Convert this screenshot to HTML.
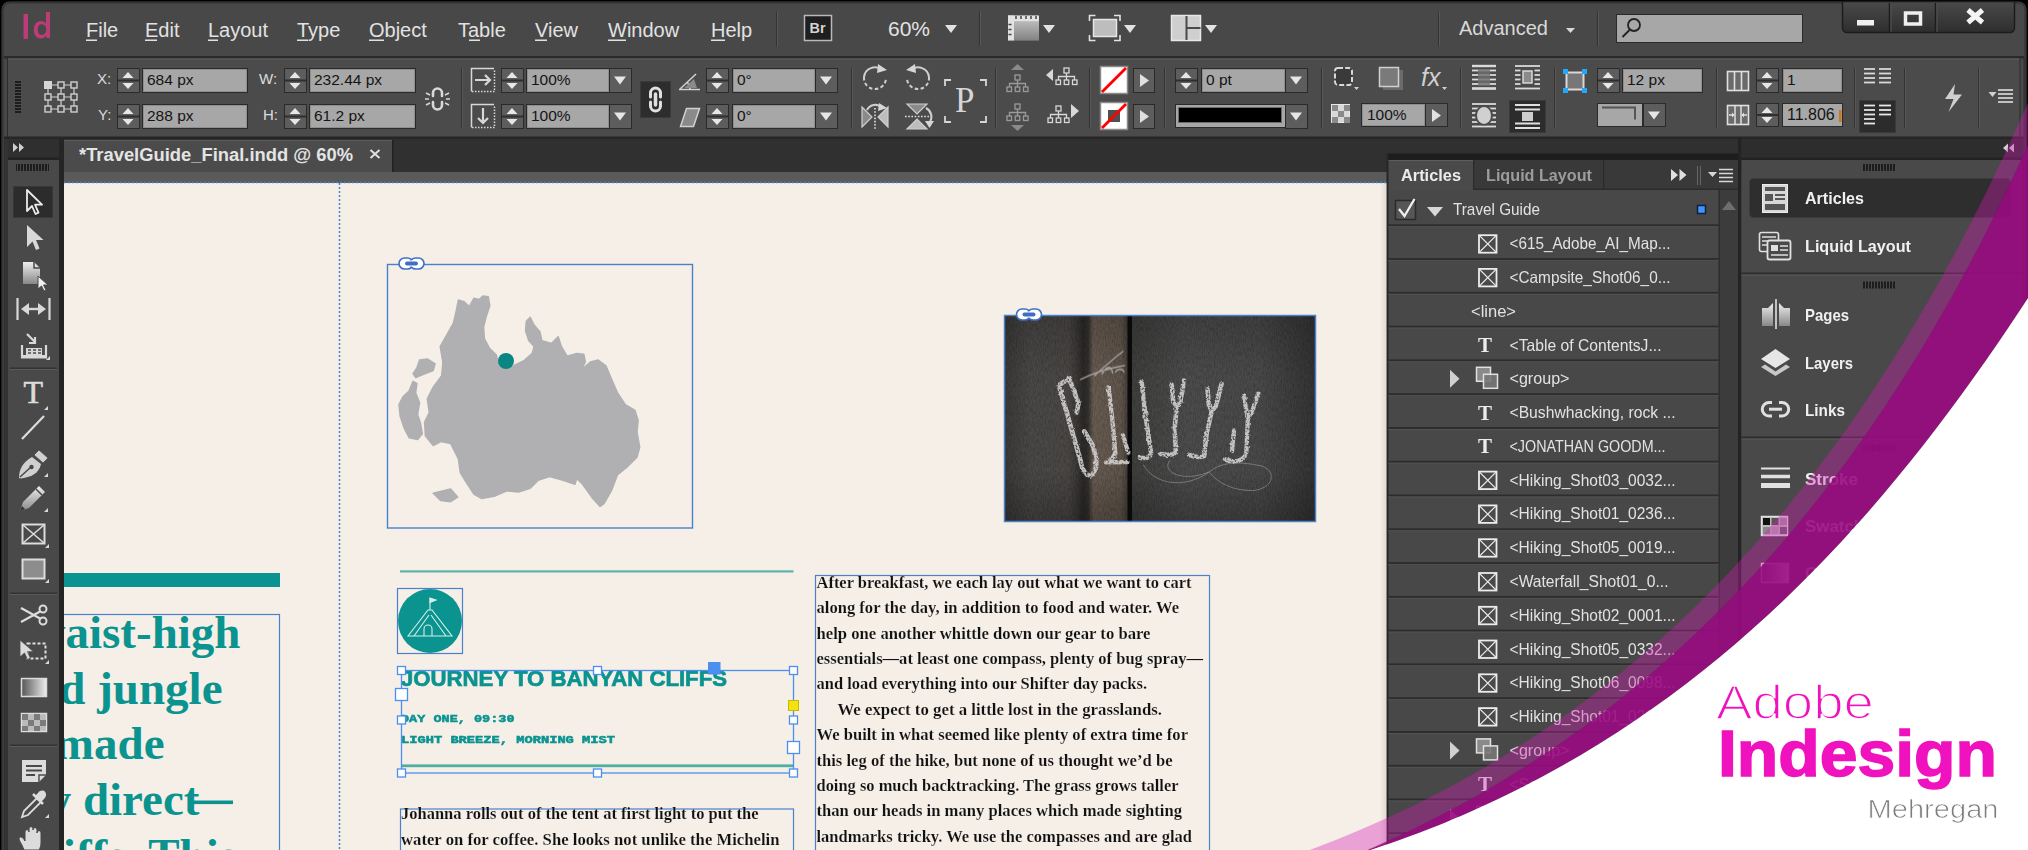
<!DOCTYPE html>
<html lang="en"><head><meta charset="utf-8"><title>Adobe InDesign - TravelGuide_Final.indd</title>
<style>
html,body{margin:0;padding:0;background:#000;}
body{width:2028px;height:850px;overflow:hidden;position:relative;font-family:"Liberation Sans",sans-serif;}
svg{position:absolute;left:0;top:0;display:block}
text{font-family:"Liberation Sans",sans-serif}
.serif{font-family:"Liberation Serif",serif}
.mono{font-family:"Liberation Mono",monospace}
.menu text{font-size:20px;fill:#e2e2e2}
.ui{fill:#dcdcdc}
</style></head><body>
<svg width="2028" height="850" viewBox="0 0 2028 850">
<defs>
<linearGradient id="gbtn" x1="0" y1="0" x2="0" y2="1"><stop offset="0" stop-color="#4a4a4a"/><stop offset="1" stop-color="#2e2e2e"/></linearGradient>
<linearGradient id="ggrad" x1="0" y1="0" x2="1" y2="0"><stop offset="0" stop-color="#555"/><stop offset="1" stop-color="#eee"/></linearGradient>
<linearGradient id="ggradv" x1="0" y1="0" x2="0" y2="1"><stop offset="0" stop-color="#eee"/><stop offset="1" stop-color="#888"/></linearGradient>
<pattern id="grip" width="3" height="8" patternUnits="userSpaceOnUse"><rect width="2" height="8" fill="#1d1d1d"/></pattern>
<pattern id="griph" width="8" height="3" patternUnits="userSpaceOnUse"><rect width="8" height="2" fill="#1d1d1d"/></pattern>
<linearGradient id="edge" x1="0" y1="0" x2="1" y2="0"><stop offset="0" stop-color="#e6ded6" stop-opacity="0"/><stop offset=".8" stop-color="#e4dcd4" stop-opacity="1"/><stop offset="1" stop-color="#f2eee9"/></linearGradient>
<clipPath id="cv"><rect x="64" y="172" width="1323" height="678"/></clipPath>
<clipPath id="wood"><rect x="1005" y="316" width="310" height="205"/></clipPath>
<filter id="noise" x="0" y="0" width="100%" height="100%"><feTurbulence type="fractalNoise" baseFrequency=".9 .25" numOctaves="2" seed="3"/><feColorMatrix type="matrix" values="0 0 0 0 0  0 0 0 0 0  0 0 0 0 0  0 0 0 1.600 -.55"/></filter>
<filter id="rough" x="-5%" y="-5%" width="110%" height="110%"><feTurbulence type="fractalNoise" baseFrequency=".05" numOctaves="2" seed="7" result="t"/><feDisplacementMap in="SourceGraphic" in2="t" scale="14" xChannelSelector="R" yChannelSelector="G" result="d"/><feTurbulence type="fractalNoise" baseFrequency=".09" numOctaves="2" seed="11" result="t2"/><feColorMatrix in="t2" type="matrix" values="0 0 0 0 0  0 0 0 0 0  0 0 0 0 0  0 0 0 3.500 -.75" result="m"/><feComposite in="d" in2="m" operator="in"/></filter>
<linearGradient id="woodL" x1="0" y1="0" x2="1" y2="0">
 <stop offset="0" stop-color="#3b3a39"/><stop offset=".2" stop-color="#4b4948"/><stop offset=".5" stop-color="#4b4846"/><stop offset=".57" stop-color="#3c3937"/><stop offset=".62" stop-color="#2c2a29"/><stop offset=".66" stop-color="#33302d"/><stop offset=".7" stop-color="#695d53"/><stop offset=".92" stop-color="#61564c"/><stop offset="1" stop-color="#3a332e"/></linearGradient>
<linearGradient id="woodR" x1="0" y1="0" x2="1" y2="0">
 <stop offset="0" stop-color="#3f3f3e"/><stop offset=".3" stop-color="#4d4d4d"/><stop offset=".7" stop-color="#4a4a4a"/><stop offset="1" stop-color="#343434"/></linearGradient>
<linearGradient id="woodV" x1="0" y1="0" x2="0" y2="1">
 <stop offset="0" stop-color="#000" stop-opacity=".15"/><stop offset=".3" stop-color="#000" stop-opacity=".0"/><stop offset=".75" stop-color="#000" stop-opacity="0"/><stop offset="1" stop-color="#000" stop-opacity=".22"/></linearGradient>
</defs>

<rect width="2028" height="850" fill="#000"/>
<path d="M1.500 850 V9.500 a8 8 0 0 1 8 -8 H2018.500 a8 8 0 0 1 8 8 V850z" fill="#484848"/>
<path d="M2.800 850 V9.500 a6.700 6.700 0 0 1 6.700 -6.700 H2018.500 a6.700 6.700 0 0 1 6.700 6.700 V850" fill="none" stroke="#333" stroke-width="1.400"/>
<rect x="4" y="56" width="2020" height="2.5" fill="#2a2a2a"/>
<rect x="8" y="58.5" width="2012" height="78" fill="#4b4b4b"/>
<rect x="8" y="58.5" width="2012" height="1" fill="#5e5e5e"/>
<rect x="7" y="58" width="1" height="79" fill="#2d2d2d"/><rect x="2019.5" y="58" width="1" height="79" fill="#2d2d2d"/>
<rect x="4" y="136.5" width="2020" height="2.5" fill="#262626"/>
<rect x="4" y="139" width="2020" height="33" fill="#303030"/>
<g fill="#bb3c76"><rect x="23.500" y="14" width="4.500" height="25"/><path d="M46 12 h4 v26 h-3.6 v-2.6 c-1.5 2 -3.3 3 -5.6 3 c-4.5 0 -7 -3.6 -7 -8.6 c0 -5 2.6 -8.8 7.2 -8.8 c2.2 0 3.8 .9 5 2.5z M41.8 35 c2.8 0 4.4 -2.2 4.4 -5.4 c0 -3.2 -1.6 -5.3 -4.4 -5.3 c-2.8 0 -4 2.2 -4 5.3 c0 3.2 1.2 5.4 4 5.4z"/></g>
<g class="menu">
<text x="86" y="37">File</text>
<rect x="86" y="39.5" width="11" height="1.5" fill="#e2e2e2"/>
<text x="145" y="37">Edit</text>
<rect x="145" y="39.5" width="12" height="1.5" fill="#e2e2e2"/>
<text x="208" y="37">Layout</text>
<rect x="208" y="39.5" width="10" height="1.5" fill="#e2e2e2"/>
<text x="297" y="37">Type</text>
<rect x="297" y="39.5" width="11" height="1.5" fill="#e2e2e2"/>
<text x="369" y="37">Object</text>
<rect x="369" y="39.5" width="15" height="1.5" fill="#e2e2e2"/>
<text x="458" y="37">Table</text>
<rect x="469" y="39.5" width="11" height="1.5" fill="#e2e2e2"/>
<text x="535" y="37">View</text>
<rect x="535" y="39.5" width="12" height="1.5" fill="#e2e2e2"/>
<text x="608" y="37">Window</text>
<rect x="608" y="39.5" width="18" height="1.5" fill="#e2e2e2"/>
<text x="711" y="37">Help</text>
<rect x="711" y="39.5" width="14" height="1.5" fill="#e2e2e2"/>
</g>
<line x1="776.5" y1="11" x2="776.5" y2="46" stroke="#333" /><line x1="777.5" y1="11" x2="777.5" y2="46" stroke="#585858"/>
<rect x="804.5" y="15.5" width="27" height="25" fill="#1f1f1f" stroke="#b9b9b9" stroke-width="1.5"/><text x="809.500" y="33" font-size="14.500" font-weight="bold" fill="#d4d4d4" textLength="16" lengthAdjust="spacingAndGlyphs">Br</text>
<text x="888" y="36" font-size="21" fill="#e2e2e2">60%</text><path d="M945 25 h12 l-6 8z" fill="#e2e2e2"/>
<line x1="979.5" y1="11" x2="979.5" y2="46" stroke="#333" /><line x1="980.5" y1="11" x2="980.5" y2="46" stroke="#585858"/>
<g><rect x="1008" y="15.500" width="31" height="25" fill="#7a7a7a"/><rect x="1008" y="15.5" width="31" height="6" fill="#e2e2e2"/><rect x="1008" y="15.5" width="6" height="25" fill="#e2e2e2"/><path d="M1016 16 v3 M1021 16 v3 M1026 16 v3 M1031 16 v3 M1036 16 v3 M1008.500 24.5 h3 M1008.5 29.500 h3 M1008.5 34.5 h3" stroke="#444" stroke-width="1.5"/><rect x="1014" y="21.5" width="25" height="19" fill="url(#ggradv)" opacity=".55"/><path d="M1043 25 h12 l-6 8z" fill="#e2e2e2"/></g>
<g><path d="M1089.5 21 v-5.500 h6 M1114 15.500 h6 v5.500 M1120 35 v5.500 h-6 M1095.500 40.500 h-6 v-5.500" fill="none" stroke="#e2e2e2" stroke-width="1.600"/><rect x="1093.5" y="19.500" width="23" height="17" fill="#bdbdbd" stroke="#e6e6e6" stroke-width="1.500"/><path d="M1124 25 h12 l-6 8z" fill="#e2e2e2"/></g>
<g><rect x="1171.500" y="15.500" width="29" height="25" fill="#cfcfcf" stroke="#e8e8e8" stroke-width="1.500"/><path d="M1186.5 16 v24 M1186.500 28 h14" stroke="#4a4a4a" stroke-width="2"/><path d="M1205 25 h12 l-6 8z" fill="#e2e2e2"/></g>
<line x1="1438.5" y1="11" x2="1438.5" y2="46" stroke="#333" /><line x1="1439.5" y1="11" x2="1439.5" y2="46" stroke="#585858"/>
<text x="1459" y="35" font-size="20" fill="#d8d8d8">Advanced</text><path d="M1566 28 h9 l-4.500 5z" fill="#d8d8d8"/>
<line x1="1597.5" y1="11" x2="1597.5" y2="46" stroke="#333" /><line x1="1598.5" y1="11" x2="1598.5" y2="46" stroke="#585858"/>
<rect x="1616.5" y="14.500" width="186" height="28" fill="#a7a7a7" stroke="#2a2a2a"/><circle cx="1634" cy="25" r="6" fill="none" stroke="#222" stroke-width="1.800"/><path d="M1629.500 30 l-7 7" stroke="#222" stroke-width="2"/>
<path d="M1842.500 1.500 H2014.500 V28 a4.500 4.500 0 0 1 -4.500 4.500 H1847 a4.500 4.500 0 0 1 -4.500 -4.500z" fill="url(#gbtn)" stroke="#1c1c1c" stroke-width="1.500"/>
<path d="M1889.500 3 V32 M1935.5 3 V32" stroke="#1c1c1c" stroke-width="1.500"/><path d="M1891 3 V32 M1937 3 V32" stroke="#555" stroke-width="1"/>
<rect x="1857" y="20" width="17" height="5.500" fill="#f0f0f0"/><rect x="1905.500" y="13" width="15" height="11" fill="none" stroke="#f0f0f0" stroke-width="3.500"/><path d="M1968 10 l14.500 12.500 M1982.500 10 l-14.500 12.500" stroke="#f4f4f4" stroke-width="5"/>
<rect x="15" y="81" width="6" height="33" fill="url(#griph)"/>
<path d="M48 85 H74 M48 97 H74 M48 109 H74 M48 85 V109 M61 85 V109 M74 85 V109" stroke="#d0d0d0" stroke-width="1.200" fill="none"/><rect x="44" y="81" width="8" height="8" fill="#d6d6d6"/><rect x="45" y="94" width="6" height="6" fill="#4b4b4b" stroke="#d0d0d0" stroke-width="1.400"/><rect x="45" y="106" width="6" height="6" fill="#4b4b4b" stroke="#d0d0d0" stroke-width="1.400"/><rect x="58" y="82" width="6" height="6" fill="#4b4b4b" stroke="#d0d0d0" stroke-width="1.400"/><rect x="58" y="94" width="6" height="6" fill="#4b4b4b" stroke="#d0d0d0" stroke-width="1.400"/><rect x="58" y="106" width="6" height="6" fill="#4b4b4b" stroke="#d0d0d0" stroke-width="1.400"/><rect x="71" y="82" width="6" height="6" fill="#4b4b4b" stroke="#d0d0d0" stroke-width="1.400"/><rect x="71" y="94" width="6" height="6" fill="#4b4b4b" stroke="#d0d0d0" stroke-width="1.400"/><rect x="71" y="106" width="6" height="6" fill="#4b4b4b" stroke="#d0d0d0" stroke-width="1.400"/>
<g font-size="15" class="ui"><text x="97" y="84">X:</text><text x="98" y="120">Y:</text><text x="259" y="84">W:</text><text x="263" y="120">H:</text></g>
<rect x="117.5" y="68.5" width="22" height="24" fill="#5d5d5d" stroke="#2a2a2a"/><line x1="118" y1="80.5" x2="139" y2="80.5" stroke="#2f2f2f" stroke-width="2"/><path d="M128.0 72 l5.5 6 h-11z M128.0 89 l5.5 -6 h-11z" fill="#e6e6e6"/>
<rect x="284.5" y="68.5" width="22" height="24" fill="#5d5d5d" stroke="#2a2a2a"/><line x1="285" y1="80.5" x2="306" y2="80.5" stroke="#2f2f2f" stroke-width="2"/><path d="M295.0 72 l5.5 6 h-11z M295.0 89 l5.5 -6 h-11z" fill="#e6e6e6"/>
<rect x="501.5" y="68.5" width="22" height="24" fill="#5d5d5d" stroke="#2a2a2a"/><line x1="502" y1="80.5" x2="523" y2="80.5" stroke="#2f2f2f" stroke-width="2"/><path d="M512.0 72 l5.5 6 h-11z M512.0 89 l5.5 -6 h-11z" fill="#e6e6e6"/>
<rect x="706.5" y="68.5" width="22" height="24" fill="#5d5d5d" stroke="#2a2a2a"/><line x1="707" y1="80.5" x2="728" y2="80.5" stroke="#2f2f2f" stroke-width="2"/><path d="M717.0 72 l5.5 6 h-11z M717.0 89 l5.5 -6 h-11z" fill="#e6e6e6"/>
<rect x="117.5" y="104.5" width="22" height="24" fill="#5d5d5d" stroke="#2a2a2a"/><line x1="118" y1="116.5" x2="139" y2="116.5" stroke="#2f2f2f" stroke-width="2"/><path d="M128.0 108 l5.5 6 h-11z M128.0 125 l5.5 -6 h-11z" fill="#e6e6e6"/>
<rect x="284.5" y="104.5" width="22" height="24" fill="#5d5d5d" stroke="#2a2a2a"/><line x1="285" y1="116.5" x2="306" y2="116.5" stroke="#2f2f2f" stroke-width="2"/><path d="M295.0 108 l5.5 6 h-11z M295.0 125 l5.5 -6 h-11z" fill="#e6e6e6"/>
<rect x="501.5" y="104.5" width="22" height="24" fill="#5d5d5d" stroke="#2a2a2a"/><line x1="502" y1="116.5" x2="523" y2="116.5" stroke="#2f2f2f" stroke-width="2"/><path d="M512.0 108 l5.5 6 h-11z M512.0 125 l5.5 -6 h-11z" fill="#e6e6e6"/>
<rect x="706.5" y="104.5" width="22" height="24" fill="#5d5d5d" stroke="#2a2a2a"/><line x1="707" y1="116.5" x2="728" y2="116.5" stroke="#2f2f2f" stroke-width="2"/><path d="M717.0 108 l5.5 6 h-11z M717.0 125 l5.5 -6 h-11z" fill="#e6e6e6"/>
<rect x="142.5" y="68.5" width="105" height="24" fill="#a7a7a7" stroke="#2a2a2a"/><rect x="143.5" y="69.5" width="103" height="22" fill="none" stroke="#8e8e8e"/><text x="147" y="85" font-size="15.5" fill="#141414">684 px</text>
<rect x="142.5" y="104.5" width="105" height="24" fill="#a7a7a7" stroke="#2a2a2a"/><rect x="143.5" y="105.5" width="103" height="22" fill="none" stroke="#8e8e8e"/><text x="147" y="121" font-size="15.5" fill="#141414">288 px</text>
<rect x="309.5" y="68.5" width="106" height="24" fill="#a7a7a7" stroke="#2a2a2a"/><rect x="310.5" y="69.5" width="104" height="22" fill="none" stroke="#8e8e8e"/><text x="314" y="85" font-size="15.5" fill="#141414">232.44 px</text>
<rect x="309.5" y="104.5" width="106" height="24" fill="#a7a7a7" stroke="#2a2a2a"/><rect x="310.5" y="105.5" width="104" height="22" fill="none" stroke="#8e8e8e"/><text x="314" y="121" font-size="15.5" fill="#141414">61.2 px</text>
<g fill="none" stroke="#d8d8d8" stroke-width="2.600" stroke-linecap="round"><path d="M433 96 v-3 a4.500 4.500 0 0 1 9 0 v3 M433 102 v3 a4.500 4.500 0 0 0 9 0 v-3"/></g><path d="M426 93 l4 2 M425 99 h4 M426 105 l4 -2 M449 93 l-4 2 M450 99 h-4 M449 105 l-4 -2" stroke="#d8d8d8" stroke-width="1.500"/>
<line x1="461.5" y1="68" x2="461.5" y2="128" stroke="#333" /><line x1="462.5" y1="68" x2="462.5" y2="128" stroke="#585858"/>
<g fill="none" stroke="#d8d8d8"><path d="M471.500 91.500 V68.500 H494" stroke-width="1.500"/><path d="M472 91.500 H494.500 V69" stroke-width="1.500" stroke-dasharray="1.500 1.500"/><path d="M475 80 h14 M485 75 l5 5 l-5 5" stroke-width="2.200"/><path d="M471.500 127.500 V104.500 H494" stroke-width="1.500"/><path d="M472 127.500 H494.500 V105" stroke-width="1.500" stroke-dasharray="1.500 1.500"/><path d="M483 108 v14 M478 118 l5 5 l5 -5" stroke-width="2.200"/></g>
<rect x="526.5" y="68.5" width="83" height="24" fill="#a7a7a7" stroke="#2a2a2a"/><rect x="527.5" y="69.5" width="81" height="22" fill="none" stroke="#8e8e8e"/><text x="531" y="85" font-size="15.5" fill="#141414">100%</text>
<rect x="609.5" y="68.5" width="22" height="24" fill="#5d5d5d" stroke="#2a2a2a"/><path d="M614.0 76.5 h12 l-6 8z" fill="#e6e6e6"/>
<rect x="526.5" y="104.5" width="83" height="24" fill="#a7a7a7" stroke="#2a2a2a"/><rect x="527.5" y="105.5" width="81" height="22" fill="none" stroke="#8e8e8e"/><text x="531" y="121" font-size="15.5" fill="#141414">100%</text>
<rect x="609.5" y="104.5" width="22" height="24" fill="#5d5d5d" stroke="#2a2a2a"/><path d="M614.0 112.5 h12 l-6 8z" fill="#e6e6e6"/>
<rect x="640.5" y="81.500" width="30" height="36" fill="#2d2d2d" stroke="#3a3a3a"/><g fill="none" stroke="#e0e0e0" stroke-width="3" stroke-linecap="round"><path d="M650.500 97 v-4 a5 5 0 0 1 10 0 v4 M650.500 102 v4 a5 5 0 0 0 10 0 v-4"/><path d="M655.500 94 v11" stroke-width="3.500"/></g>
<path d="M679 89.500 h21 M680 89 l16 -15 M690 89 a10 10 0 0 0 -3 -7" fill="none" stroke="#d0d0d0" stroke-width="1.600"/><path d="M684 88 l10 -9 l3 9z" fill="#8a8a8a"/>
<path d="M680.500 126.500 l6 -18 h13 l-6 18z" fill="#8a8a8a" stroke="#d0d0d0" stroke-width="1.500"/>
<rect x="732.5" y="68.5" width="83" height="24" fill="#a7a7a7" stroke="#2a2a2a"/><rect x="733.5" y="69.5" width="81" height="22" fill="none" stroke="#8e8e8e"/><text x="737" y="85" font-size="15.5" fill="#141414">0°</text>
<rect x="815.5" y="68.5" width="22" height="24" fill="#5d5d5d" stroke="#2a2a2a"/><path d="M820.0 76.5 h12 l-6 8z" fill="#e6e6e6"/>
<rect x="732.5" y="104.5" width="83" height="24" fill="#a7a7a7" stroke="#2a2a2a"/><rect x="733.5" y="105.5" width="81" height="22" fill="none" stroke="#8e8e8e"/><text x="737" y="121" font-size="15.5" fill="#141414">0°</text>
<rect x="815.5" y="104.5" width="22" height="24" fill="#5d5d5d" stroke="#2a2a2a"/><path d="M820.0 112.5 h12 l-6 8z" fill="#e6e6e6"/>
<line x1="851.5" y1="68" x2="851.5" y2="128" stroke="#333" /><line x1="852.5" y1="68" x2="852.5" y2="128" stroke="#585858"/>
<g fill="none" stroke="#cfcfcf" stroke-width="2"><path d="M864 77 a11 11 0 0 1 18 -7"/><path d="M864 77 a11 11 0 0 0 22 2" stroke-dasharray="3.500 2.500"/><path d="M929 77 a11 11 0 0 0 -18 -7"/><path d="M929 77 a11 11 0 0 1 -22 2" stroke-dasharray="3.500 2.500"/></g><path d="M878 64 l9 6 l-10 3z M915 64 l-9 6 l10 3z" fill="#d6d6d6"/>
<g><path d="M862 107 v20 l10 -10z" fill="#8a8a8a" stroke="#cfcfcf" stroke-width="1.200"/><path d="M888 107 v20 l-10 -10z" fill="#bdbdbd" stroke="#cfcfcf" stroke-width="1.200"/><path d="M875 108 v22" stroke="#e0e0e0" stroke-width="1.600" stroke-dasharray="1.600 1.600"/><path d="M867 110 a9 9 0 0 1 15 -2" fill="none" stroke="#cfcfcf" stroke-width="2"/><path d="M879 103 l8 5 l-9 3z" fill="#d6d6d6"/><path d="M907 104 h20 l-10 10z" fill="#8a8a8a" stroke="#cfcfcf" stroke-width="1.200"/><path d="M907 129 h20 l-10 -10z" fill="#bdbdbd" stroke="#cfcfcf" stroke-width="1.200"/><path d="M905 116.500 h24" stroke="#e0e0e0" stroke-width="1.600" stroke-dasharray="1.600 1.600"/><path d="M926 108 a10 10 0 0 1 4 14" fill="none" stroke="#cfcfcf" stroke-width="2"/><path d="M925 121 h9 l-4.500 7z" fill="#d6d6d6"/></g>
<path d="M945 86 v-6 h6 M980 80 h6 v6 M986 116 v6 h-6 M951 122 h-6 v-6" fill="none" stroke="#d6d6d6" stroke-width="1.800"/><text x="955" y="112" class="serif" font-size="35" fill="#d6d6d6">P</text>
<line x1="995.5" y1="68" x2="995.5" y2="128" stroke="#333" /><line x1="996.5" y1="68" x2="996.5" y2="128" stroke="#585858"/>
<g fill="none" stroke="#9a9a9a" stroke-width="1.300"><rect x="1015.0" y="75" width="5" height="5"/><path d="M1017.5 80 v3.500 M1009.5 87 v-3.500 h16 v3.500 M1017.5 83.5 v3.500"/><rect x="1007.0" y="87" width="4.500" height="4.500"/><rect x="1015.25" y="87" width="4.500" height="4.500"/><rect x="1023.5" y="87" width="4.500" height="4.500"/></g><path d="M1011 70 h13 l-6.500 -6z" fill="#8a8a8a"/>
<g fill="none" stroke="#9a9a9a" stroke-width="1.300"><rect x="1015.0" y="104" width="5" height="5"/><path d="M1017.5 109 v3.500 M1009.5 116 v-3.500 h16 v3.500 M1017.5 112.5 v3.500"/><rect x="1007.0" y="116" width="4.500" height="4.500"/><rect x="1015.25" y="116" width="4.500" height="4.500"/><rect x="1023.5" y="116" width="4.500" height="4.500"/></g><path d="M1011 125 h13 l-6.500 6z" fill="#8a8a8a"/>
<g fill="none" stroke="#d8d8d8" stroke-width="1.300"><rect x="1064.0" y="68" width="5" height="5"/><path d="M1066.5 73 v3.500 M1058.5 80 v-3.500 h16 v3.500 M1066.5 76.5 v3.500"/><rect x="1056.0" y="80" width="4.500" height="4.500"/><rect x="1064.25" y="80" width="4.500" height="4.500"/><rect x="1072.5" y="80" width="4.500" height="4.500"/></g><path d="M1053 69 v12 l-7 -6z" fill="#d8d8d8"/>
<g fill="none" stroke="#d8d8d8" stroke-width="1.300"><rect x="1056.0" y="106" width="5" height="5"/><path d="M1058.5 111 v3.500 M1050.5 118 v-3.500 h16 v3.500 M1058.5 114.5 v3.500"/><rect x="1048.0" y="118" width="4.500" height="4.500"/><rect x="1056.25" y="118" width="4.500" height="4.500"/><rect x="1064.5" y="118" width="4.500" height="4.500"/></g><path d="M1071 104 v14 l8 -7z" fill="#d8d8d8"/>
<line x1="1089.5" y1="68" x2="1089.5" y2="128" stroke="#333" /><line x1="1090.5" y1="68" x2="1090.5" y2="128" stroke="#585858"/>
<rect x="1100.500" y="66.500" width="27" height="27" fill="#fff" stroke="#8a8a8a" stroke-width="1.500"/><path d="M1102 92 L1126 68" stroke="#f00" stroke-width="2.800"/>
<rect x="1100.500" y="102.500" width="27" height="27" fill="#fff" stroke="#8a8a8a" stroke-width="1.500"/><rect x="1108" y="110" width="12" height="12" fill="#4f4f4f"/><path d="M1102 128 L1126 104" stroke="#f00" stroke-width="2.800"/>
<rect x="1133.5" y="68.5" width="21" height="24" fill="#5d5d5d" stroke="#2a2a2a"/><path d="M1140 74 v13 l9 -6.5z" fill="#e0e0e0"/>
<rect x="1133.5" y="104.5" width="21" height="24" fill="#5d5d5d" stroke="#2a2a2a"/><path d="M1140 110 v13 l9 -6.5z" fill="#e0e0e0"/>
<line x1="1164.5" y1="68" x2="1164.5" y2="128" stroke="#333" /><line x1="1165.5" y1="68" x2="1165.5" y2="128" stroke="#585858"/>
<rect x="1175.5" y="68.5" width="22" height="24" fill="#5d5d5d" stroke="#2a2a2a"/><line x1="1176" y1="80.5" x2="1197" y2="80.5" stroke="#2f2f2f" stroke-width="2"/><path d="M1186.0 72 l5.5 6 h-11z M1186.0 89 l5.5 -6 h-11z" fill="#e6e6e6"/>
<rect x="1201.5" y="68.5" width="84" height="24" fill="#a7a7a7" stroke="#2a2a2a"/><rect x="1202.5" y="69.5" width="82" height="22" fill="none" stroke="#8e8e8e"/><text x="1206" y="85" font-size="15.5" fill="#141414">0 pt</text>
<rect x="1285.5" y="68.5" width="22" height="24" fill="#5d5d5d" stroke="#2a2a2a"/><path d="M1290.0 76.5 h12 l-6 8z" fill="#e6e6e6"/>
<rect x="1175.500" y="104.500" width="110" height="23" fill="#a7a7a7" stroke="#2a2a2a"/><rect x="1179" y="108" width="102" height="14" fill="#000"/><rect x="1178.500" y="107.500" width="103" height="15" fill="none" stroke="#6b6b6b"/>
<rect x="1285.5" y="104.5" width="22" height="24" fill="#5d5d5d" stroke="#2a2a2a"/><path d="M1290.0 112.5 h12 l-6 8z" fill="#e6e6e6"/>
<line x1="1321.5" y1="68" x2="1321.5" y2="128" stroke="#333" /><line x1="1322.5" y1="68" x2="1322.5" y2="128" stroke="#585858"/>
<rect x="1335" y="68" width="17" height="17" rx="3" fill="#3a3a3a" stroke="#d8d8d8" stroke-width="2" stroke-dasharray="5 2.200"/><path d="M1354 87 h5 l-2.500 3z" fill="#d0d0d0"/>
<rect x="1383" y="70" width="20" height="20" fill="#6a6a6a"/><rect x="1379.500" y="67.500" width="19" height="19" fill="#7a7a7a" stroke="#d0d0d0" stroke-width="1.500"/>
<text x="1421" y="86" font-size="25" font-style="italic" fill="#d0d0d0">fx</text><path d="M1442 87 h5 l-2.500 3z" fill="#d0d0d0"/>
<rect x="1331.5" y="104.500" width="18" height="18" fill="#d8d8d8" stroke="#e8e8e8"/><path d="M1332 105 h6 v6 h-6z M1344 105 h6 v6 h-6z M1338 111 h6 v6 h-6z M1332 117 h6 v6 h-6z M1344 117 h6 v6 h-6z" fill="#8a8a8a"/>
<rect x="1361.5" y="103.5" width="64" height="23" fill="#a7a7a7" stroke="#2a2a2a"/><rect x="1362.5" y="104.5" width="62" height="21" fill="none" stroke="#8e8e8e"/><text x="1367" y="120" font-size="15.5" fill="#141414">100%</text>
<rect x="1425.5" y="103.5" width="22" height="23" fill="#5d5d5d" stroke="#2a2a2a"/><path d="M1432 109 v13 l9 -6.5z" fill="#e0e0e0"/>
<line x1="1460.5" y1="68" x2="1460.5" y2="128" stroke="#333" /><line x1="1461.5" y1="68" x2="1461.5" y2="128" stroke="#585858"/>
<path d="M1472 66 H1496" stroke="#dadada" stroke-width="1.8"/><path d="M1472 70.5 H1496" stroke="#dadada" stroke-width="1.8"/><path d="M1472 75 H1496" stroke="#dadada" stroke-width="1.8"/><path d="M1472 79.5 H1496" stroke="#dadada" stroke-width="1.8"/><path d="M1472 84 H1496" stroke="#dadada" stroke-width="1.8"/><path d="M1472 88.5 H1496" stroke="#dadada" stroke-width="1.8"/><rect x="1478" y="69" width="12" height="17" fill="#6e6e6e" opacity=".8"/><path d="M1472 66 H1496" stroke="#dadada" stroke-width="2.4"/><path d="M1472 88.5 H1496" stroke="#dadada" stroke-width="2.4"/>
<path d="M1515 66 H1540" stroke="#dadada" stroke-width="1.8"/><path d="M1515 70.5 H1540" stroke="#dadada" stroke-width="1.8"/><path d="M1515 75 H1540" stroke="#dadada" stroke-width="1.8"/><path d="M1515 79.5 H1540" stroke="#dadada" stroke-width="1.8"/><path d="M1515 84 H1540" stroke="#dadada" stroke-width="1.8"/><path d="M1515 88.5 H1540" stroke="#dadada" stroke-width="1.8"/><rect x="1520.5" y="68.500" width="14" height="17" fill="#4b4b4b"/><rect x="1523" y="71" width="9" height="12" fill="#8a8a8a" stroke="#d8d8d8" stroke-width="1.500"/>
<path d="M1472 104 H1496" stroke="#dadada" stroke-width="1.8"/><path d="M1472 108.5 H1496" stroke="#dadada" stroke-width="1.8"/><path d="M1472 113 H1496" stroke="#dadada" stroke-width="1.8"/><path d="M1472 117.5 H1496" stroke="#dadada" stroke-width="1.8"/><path d="M1472 122 H1496" stroke="#dadada" stroke-width="1.8"/><path d="M1472 126.5 H1496" stroke="#dadada" stroke-width="1.8"/><ellipse cx="1484" cy="115.500" rx="9" ry="10" fill="#4b4b4b"/><ellipse cx="1484" cy="115.500" rx="7" ry="8.500" fill="#d0d0d0"/>
<rect x="1509.500" y="100.500" width="36" height="32" fill="#2c2c2c" stroke="#3a3a3a"/><path d="M1515 105 H1540" stroke="#e0e0e0" stroke-width="2"/><path d="M1515 109.5 H1540" stroke="#e0e0e0" stroke-width="2"/><path d="M1515 123.5 H1540" stroke="#e0e0e0" stroke-width="2"/><path d="M1515 128 H1540" stroke="#e0e0e0" stroke-width="2"/><rect x="1522" y="112" width="11" height="9" fill="#cfcfcf"/>
<line x1="1554.5" y1="68" x2="1554.5" y2="128" stroke="#333" /><line x1="1555.5" y1="68" x2="1555.5" y2="128" stroke="#585858"/>
<rect x="1566.5" y="72.500" width="17" height="17" fill="#777" stroke="#d8d8d8" stroke-width="2"/><g fill="#22a7ff"><rect x="1563" y="69" width="5" height="5"/><rect x="1582" y="69" width="5" height="5"/><rect x="1563" y="88" width="5" height="5"/><rect x="1582" y="88" width="5" height="5"/></g>
<rect x="1597.5" y="68.5" width="22" height="24" fill="#5d5d5d" stroke="#2a2a2a"/><line x1="1598" y1="80.5" x2="1619" y2="80.5" stroke="#2f2f2f" stroke-width="2"/><path d="M1608.0 72 l5.5 6 h-11z M1608.0 89 l5.5 -6 h-11z" fill="#e6e6e6"/>
<rect x="1622.5" y="68.5" width="80" height="24" fill="#a7a7a7" stroke="#2a2a2a"/><rect x="1623.5" y="69.5" width="78" height="22" fill="none" stroke="#8e8e8e"/><text x="1627" y="85" font-size="15.5" fill="#141414">12 px</text>
<rect x="1597.500" y="103.500" width="45" height="23" fill="#a7a7a7" stroke="#2a2a2a"/><path d="M1602 107.500 h33 v12" fill="none" stroke="#555" stroke-width="2"/>
<rect x="1643.5" y="103.5" width="22" height="23" fill="#5d5d5d" stroke="#2a2a2a"/><path d="M1648.0 111.5 h12 l-6 8z" fill="#e6e6e6"/>
<line x1="1716.5" y1="68" x2="1716.5" y2="128" stroke="#333" /><line x1="1717.5" y1="68" x2="1717.5" y2="128" stroke="#585858"/>
<rect x="1727.500" y="71.500" width="21" height="19" fill="#6a6a6a" stroke="#e0e0e0" stroke-width="1.600"/><path d="M1734.500 72 v18 M1741.500 72 v18" stroke="#e0e0e0" stroke-width="1.600"/>
<rect x="1727.500" y="105.500" width="21" height="19" fill="#6a6a6a" stroke="#e0e0e0" stroke-width="1.600"/><path d="M1735 106 v18 M1741 106 v18" stroke="#e0e0e0" stroke-width="1.500"/><path d="M1729 115 h5 M1742 115 h5" stroke="#e0e0e0" stroke-width="1.500"/><path d="M1732 112.500 l2.500 2.500 l-2.500 2.500z M1744 112.500 l-2.500 2.500 l2.500 2.500z" fill="#e0e0e0"/>
<rect x="1756.5" y="68.5" width="22" height="24" fill="#5d5d5d" stroke="#2a2a2a"/><line x1="1757" y1="80.5" x2="1778" y2="80.5" stroke="#2f2f2f" stroke-width="2"/><path d="M1767.0 72 l5.5 6 h-11z M1767.0 89 l5.5 -6 h-11z" fill="#e6e6e6"/>
<rect x="1782.5" y="68.5" width="60" height="24" fill="#a7a7a7" stroke="#2a2a2a"/><rect x="1783.5" y="69.5" width="58" height="22" fill="none" stroke="#8e8e8e"/><text x="1787" y="85" font-size="15.5" fill="#141414">1</text>
<rect x="1756.5" y="103.5" width="22" height="23" fill="#5d5d5d" stroke="#2a2a2a"/><line x1="1757" y1="115.0" x2="1778" y2="115.0" stroke="#2f2f2f" stroke-width="2"/><path d="M1767.0 107 l5.5 6 h-11z M1767.0 123 l5.5 -6 h-11z" fill="#e6e6e6"/>
<rect x="1782.500" y="103.500" width="60" height="23" fill="#a7a7a7" stroke="#2a2a2a"/><text x="1787" y="120" font-size="16" fill="#141414">11.806</text><rect x="1839" y="110" width="2.500" height="12" fill="#c87a1a"/>
<line x1="1854.5" y1="68" x2="1854.5" y2="128" stroke="#333" /><line x1="1855.5" y1="68" x2="1855.5" y2="128" stroke="#585858"/>
<path d="M1864 69 H1875" stroke="#dadada" stroke-width="1.8"/><path d="M1864 73.5 H1875" stroke="#dadada" stroke-width="1.8"/><path d="M1864 78 H1875" stroke="#dadada" stroke-width="1.8"/><path d="M1864 82.5 H1875" stroke="#dadada" stroke-width="1.8"/><path d="M1879 69 H1891" stroke="#dadada" stroke-width="1.8"/><path d="M1879 73.5 H1891" stroke="#dadada" stroke-width="1.8"/><path d="M1879 78 H1891" stroke="#dadada" stroke-width="1.8"/><path d="M1879 82.5 H1891" stroke="#dadada" stroke-width="1.8"/>
<rect x="1859.500" y="100.500" width="36" height="32" fill="#2c2c2c" stroke="#3a3a3a"/><path d="M1864 105.5 H1875" stroke="#e6e6e6" stroke-width="1.8"/><path d="M1864 110 H1875" stroke="#e6e6e6" stroke-width="1.8"/><path d="M1864 114.5 H1875" stroke="#e6e6e6" stroke-width="1.8"/><path d="M1864 119 H1875" stroke="#e6e6e6" stroke-width="1.8"/><path d="M1864 123.5 H1875" stroke="#e6e6e6" stroke-width="1.8"/><path d="M1879 105.5 H1891" stroke="#e6e6e6" stroke-width="1.8"/><path d="M1879 110 H1891" stroke="#e6e6e6" stroke-width="1.8"/><path d="M1879 114.5 H1891" stroke="#e6e6e6" stroke-width="1.8"/>
<line x1="1904.5" y1="68" x2="1904.5" y2="128" stroke="#333" /><line x1="1905.5" y1="68" x2="1905.5" y2="128" stroke="#585858"/>
<path d="M1955 84 l-10 15 h8.500 l-5 13 l13.500 -17.500 h-8.500z" fill="#cfcfcf"/>
<line x1="1978.5" y1="68" x2="1978.5" y2="128" stroke="#333" /><line x1="1979.5" y1="68" x2="1979.5" y2="128" stroke="#585858"/>
<path d="M1988.5 92 h8 l-4 5z" fill="#d0d0d0"/><path d="M1998 90 H2013" stroke="#d0d0d0" stroke-width="1.8"/><path d="M1998 94 H2013" stroke="#d0d0d0" stroke-width="1.8"/><path d="M1998 98 H2013" stroke="#d0d0d0" stroke-width="1.8"/><path d="M1998 102 H2013" stroke="#d0d0d0" stroke-width="1.8"/>
<rect x="8" y="139" width="51" height="18.500" fill="#2f2f2f"/><path d="M13 143 v9 l5 -4.500z M19 143 v9 l5 -4.500z" fill="#d0d0d0"/>
<rect x="4" y="139" width="4" height="711" fill="#333"/>
<rect x="8" y="157.500" width="51" height="2.500" fill="#222"/><rect x="8" y="160" width="51" height="690" fill="#494949"/>
<rect x="59" y="139" width="5" height="711" fill="#252525"/>
<rect x="16" y="164" width="33" height="7" fill="url(#grip)"/>
<rect x="64" y="140" width="328" height="32" fill="#4b4b4b"/><rect x="64" y="140" width="328" height="1" fill="#5c5c5c"/><rect x="392" y="140" width="1.500" height="32" fill="#222"/>
<text x="79" y="161" font-size="18" font-weight="bold" fill="#e4e4e4" textLength="274" lengthAdjust="spacingAndGlyphs">*TravelGuide_Final.indd @ 60%</text>
<path d="M370.500 150 l9 8 M379.500 150 l-9 8" stroke="#e0e0e0" stroke-width="2"/>
<rect x="13.500" y="186.500" width="39" height="31" fill="#2c2c2c" stroke="#383838"/><path d="M27 190 v21 l5 -5 l3.500 8 l3 -1.300 l-3.500 -8 h7z" fill="#2c2c2c" stroke="#ececec" stroke-width="1.800" stroke-linejoin="round"/><path d="M27 225 v22 l5.500 -5.500 l3.500 8.500 l3.500 -1.500 l-3.500 -8.500 h7.500z" fill="#d8d8d8"/><path d="M23 262 h11 l6 6 v16 h-17z" fill="url(#ggradv)"/><path d="M34 262 v6 h6" fill="none" stroke="#494949" stroke-width="1.500"/><path d="M38 276 v13 l3.500 -3 l2.500 5 l2 -1 l-2.500 -5 h4.500z" fill="#f0f0f0" stroke="#494949" stroke-width="1"/><path d="M17.500 298 v22 M49.500 298 v22" stroke="#d8d8d8" stroke-width="2.200"/><path d="M26 309 h15" fill="none" stroke="#d8d8d8" stroke-width="2.400"/><path d="M29 303 l-8 6 l8 6z M38 303 l8 6 l-8 6z" fill="#d8d8d8"/><path d="M22 345 v11.500 h24 v-11.500" fill="none" stroke="#d8d8d8" stroke-width="2.200"/><rect x="21" y="355" width="26" height="3.500" fill="#d8d8d8"/><path d="M26 348 h16 v7 h-16z" fill="#d8d8d8"/><path d="M28 350 h3 M33 350 h3 M38 350 h3 M28 353 h3 M33 353 h3 M38 353 h3" stroke="#494949" stroke-width="1.500"/><path d="M27 334 l8 8 M35 337 v6 h-6" fill="none" stroke="#d8d8d8" stroke-width="2.200"/><path d="M46 360 h4 v-4z" fill="#d8d8d8"/><rect x="10" y="367.500" width="47" height="1.500" fill="#333"/><rect x="10" y="369" width="47" height="1" fill="#5a5a5a"/><text x="23.500" y="402.500" class="serif" font-size="32" fill="#dcdcdc" stroke="#dcdcdc" stroke-width=".6">T</text><path d="M44 410 h4 v-4z" fill="#d8d8d8"/><path d="M22 439 l22 -23" stroke="#dcdcdc" stroke-width="2.200"/><path d="M19 478 c0 -9 4 -16 13 -21 l9 7 c-2 9 -9 13 -20 14.500z" fill="#d0d0d0"/><path d="M20 477 l11 -10" stroke="#494949" stroke-width="1.500"/><circle cx="31.500" cy="467" r="2.200" fill="#494949"/><path d="M34 455 l5 -5 l9 8 l-5 5z" fill="#d0d0d0" stroke="#494949" stroke-width=".8"/><path d="M44 477 h4 v-4z" fill="#d8d8d8"/><path d="M20 511 l3 -9 l16 -16 l6 6 l-16 16z" fill="url(#ggradv)"/><path d="M20 511 l2 -5 l3 3z" fill="#333"/><path d="M36 489 l6 6" stroke="#494949" stroke-width="1.500"/><path d="M44 512 h4 v-4z" fill="#d8d8d8"/><rect x="22.500" y="524.500" width="22" height="19" fill="none" stroke="#dcdcdc" stroke-width="2"/><path d="M23 525 l21 18 M44 525 l-21 18" stroke="#dcdcdc" stroke-width="1.600"/><path d="M45 548 h4 v-4z" fill="#d8d8d8"/><rect x="22.500" y="559.500" width="22" height="19" fill="#8d8d8d" stroke="#dcdcdc" stroke-width="2"/><path d="M45 583 h4 v-4z" fill="#d8d8d8"/><rect x="10" y="592.500" width="47" height="1.500" fill="#333"/><rect x="10" y="594" width="47" height="1" fill="#5a5a5a"/><path d="M21 608 l20 11 M21 622 l20 -11" stroke="#dcdcdc" stroke-width="2.200"/><circle cx="43" cy="609" r="3.500" fill="none" stroke="#dcdcdc" stroke-width="2"/><circle cx="43" cy="621" r="3.500" fill="none" stroke="#dcdcdc" stroke-width="2"/><rect x="27.500" y="643.500" width="18" height="15" fill="none" stroke="#e0e0e0" stroke-width="2" stroke-dasharray="3 2"/><path d="M20 640 v17 l4.500 -4 l3 6.500 l3 -1.300 l-3 -6.500 h6z" fill="#dcdcdc" stroke="#494949" stroke-width=".8"/><path d="M45 664 h4 v-4z" fill="#d8d8d8"/><rect x="21.500" y="678.500" width="25" height="18" fill="url(#ggrad)" stroke="#dcdcdc" stroke-width="1.500"/><rect x="21.500" y="713.500" width="25" height="18" fill="#bbb" stroke="#dcdcdc" stroke-width="1.500"/><path d="M22 714 h6 v6 h-6z M34 714 h6 v6 h-6z M28 720 h6 v6 h-6z M40 720 h6 v6 h-6z M22 726 h6 v5 h-6z M34 726 h6 v5 h-6z" fill="#666" opacity=".75"/><rect x="10" y="744.500" width="47" height="1.500" fill="#333"/><rect x="10" y="746" width="47" height="1" fill="#5a5a5a"/><path d="M22 760 h24 v15 l-7 7 h-17z" fill="#dcdcdc"/><path d="M26 766 h16 M26 770.500 h16 M26 775 h9" stroke="#494949" stroke-width="1.800"/><path d="M39 782 v-7 h7" fill="none" stroke="#494949" stroke-width="1.400"/><path d="M22 817 l2 -6 l13 -13 l4 4 l-13 13z" fill="none" stroke="#dcdcdc" stroke-width="1.800"/><path d="M35 796 l3 -3 c2 -3 6 -3 7 -1 c2 2 1 5 -1 7 l-3 3z" fill="#dcdcdc"/><path d="M33 794 l10 10" stroke="#dcdcdc" stroke-width="2.500"/><path d="M45 818 h4 v-4z" fill="#d8d8d8"/><path d="M24 850 c-2 -6 -5 -9 -5 -12 c1 -2 4 -1 6 3 v-9 c0 -3 4 -3 4 0 v-3 c0 -3 4 -3 4 0 v1 c0 -3 4 -3 4 0 v3 c0 -3 4 -3 4 0 v10 c0 3 -1 5 -2 7z" fill="#dcdcdc" stroke="#494949" stroke-width="1"/><rect x="64" y="172" width="1323" height="11" fill="#5a5a5a"/>
<rect x="64" y="183" width="1323" height="667" fill="#f5efe8"/>
<rect x="1380" y="183" width="6.500" height="667" fill="url(#edge)"/>
<path d="M64 182.500 H1387" stroke="#4a80cc" stroke-width="1.500" stroke-dasharray="2 2"/>
<path d="M339.500 183 V850" stroke="#4a80cc" stroke-width="1.500" stroke-dasharray="2 2"/>
<g clip-path="url(#cv)">
<rect x="40" y="573" width="240" height="14" fill="#0b9390"/>
<rect x="30" y="614.500" width="249.500" height="260" fill="none" stroke="#4a80cc" stroke-width="1.200"/>
<text x="240.5" y="647.5" text-anchor="end" class="serif" font-weight="bold" font-size="47" fill="#0b9390">waist-high</text>
<text x="222.5" y="703.5" text-anchor="end" class="serif" font-weight="bold" font-size="47" fill="#0b9390">d jungle</text>
<text x="164.5" y="759" text-anchor="end" class="serif" font-weight="bold" font-size="47" fill="#0b9390">made</text>
<text x="199.5" y="815" text-anchor="end" class="serif" font-weight="bold" font-size="47" fill="#0b9390">y direct</text>
<text x="237" y="871" text-anchor="end" class="serif" font-weight="bold" font-size="47" fill="#0b9390">liffs. This</text>
<rect x="190" y="800.500" width="43" height="3.600" fill="#0b9390"/>
<rect x="387.500" y="264.500" width="305" height="263.500" fill="none" stroke="#4a80cc" stroke-width="1.400"/>
<rect x="399.0" y="258.0" width="14" height="11" rx="5.500" fill="#fff" stroke="#3f6fc4" stroke-width="1.600"/><rect x="410.0" y="258.0" width="14" height="11" rx="5.500" fill="#fff" stroke="#3f6fc4" stroke-width="1.600"/><rect x="402.5" y="260.5" width="18" height="6" fill="#fff"/><rect x="405.0" y="261.5" width="13" height="4" rx="2" fill="#3f6fc4"/>
<path d="M458.4 299.9 L464.2 301.8 L469.3 306.5 L473.9 298.3 L479.0 299.5 L482.9 296.0 L488.3 296.8 L489.8 305.7 L486.0 317.3 L483.6 327.0 L484.4 338.7 L489.5 348.4 L496.4 355.0 L498.4 363.9 L506.9 369.8 L515.5 364.7 L524.4 360.4 L532.2 353.4 L534.1 346.5 L528.7 340.6 L525.6 330.9 L526.3 321.2 L530.2 317.3 L534.1 325.1 L539.9 331.7 L541.9 340.6 L551.6 343.4 L558.2 336.8 L561.3 346.5 L567.1 356.2 L576.8 353.4 L583.8 354.2 L585.3 362.0 L581.5 369.8 L590.4 362.0 L598.2 360.0 L605.9 365.9 L611.7 379.5 L617.6 393.0 L625.3 404.7 L635.0 410.5 L638.1 420.2 L637.0 431.9 L639.7 447.4 L637.0 457.1 L627.3 466.8 L617.6 474.6 L611.7 490.1 L604.0 503.7 L600.1 506.4 L592.3 497.9 L582.6 484.3 L576.8 478.4 L574.9 484.3 L563.2 480.4 L549.6 476.5 L538.0 480.4 L530.2 488.2 L518.6 492.0 L506.9 490.9 L495.3 495.9 L481.7 498.6 L473.9 494.0 L466.2 482.3 L460.3 472.6 L458.4 459.0 L450.6 443.5 L440.9 441.6 L433.2 445.5 L425.4 435.7 L424.6 422.2 L429.3 412.5 L427.3 398.9 L433.2 387.2 L441.7 375.6 L442.9 362.0 L440.2 346.5 L446.8 334.8 L453.4 323.2 L456.5 309.6Z M419.6 360.0 L427.3 358.9 L435.1 363.9 L433.2 370.5 L423.5 374.4 L415.7 377.5 L413.0 373.6 L416.9 367.8Z M413.0 381.4 L416.9 383.3 L415.7 393.0 L419.6 402.7 L417.6 414.4 L420.7 424.1 L422.3 433.8 L417.6 439.6 L409.1 437.7 L404.1 428.0 L400.2 416.3 L399.0 404.7 L402.9 396.9 L409.1 391.1Z M433.2 493.2 L450.6 488.9 L457.6 497.1 L450.6 501.7 L440.9 500.6Z" fill="#b0b0b3" stroke="#b0b0b3" stroke-width="1.500" stroke-linejoin="round"/>
<circle cx="506" cy="361" r="8" fill="#0b8581"/>
<g clip-path="url(#wood)"><rect x="1005" y="316" width="126" height="205" fill="url(#woodL)"/><rect x="1131" y="316" width="184" height="205" fill="url(#woodR)"/><rect x="1005" y="316" width="310" height="205" fill="url(#woodV)"/><rect x="1127.500" y="316" width="4.500" height="205" fill="#0b0b0b"/><rect x="1005" y="316" width="310" height="205" filter="url(#noise)" opacity=".25"/><g transform="translate(1040 340) scale(.18825)"><g fill="none" stroke="#d8d8d8" stroke-width="25" stroke-linecap="round" stroke-linejoin="round" opacity=".85" filter="url(#rough)"><path d="M195 385 L205 335 L155 205 L100 240 L215 640 C225 700 250 730 275 715 C310 690 300 620 280 560 L235 485"/><path d="M365 250 L385 430 L400 600 C380 640 360 650 350 650 L465 648 M440 505 L470 600" stroke-width="23"/><path d="M540 220 L560 400 L590 600 C585 625 560 630 530 625" stroke-width="24"/><path d="M700 238 L708 330 L727 352 M765 215 L745 330 L727 352 L715 470 L722 598 C700 612 670 612 642 606" stroke-width="24"/><path d="M890 262 L896 340 L912 378 M965 232 L935 350 L912 378 L885 500 L872 618 C845 625 815 620 792 610" stroke-width="24"/><path d="M1160 282 L1130 370 L1104 420 M1085 300 L1100 400 L1104 420 L1096 600 C1080 650 1030 650 982 634 M1030 480 L1020 590" stroke-width="23"/></g><g fill="none" stroke="#c4c4c4" stroke-width="7" stroke-linecap="round" opacity=".7"><path d="M215 210 C290 170 370 150 450 135 M290 190 C330 150 380 110 440 60 M330 180 C350 140 380 130 385 175 M400 170 C415 150 440 150 445 170"/><path d="M550 665 C600 760 760 800 900 700 C960 650 1050 640 1180 670 C1260 700 1240 790 1130 800 C1020 800 950 760 900 705 M690 640 C640 700 760 760 900 700" stroke-width="4" opacity=".8"/></g></g></g>
<rect x="1004.500" y="315.500" width="311" height="206" fill="none" stroke="#4a80cc" stroke-width="1.500"/>
<rect x="1016.5" y="309.0" width="14" height="11" rx="5.500" fill="#fff" stroke="#3f6fc4" stroke-width="1.600"/><rect x="1027.5" y="309.0" width="14" height="11" rx="5.500" fill="#fff" stroke="#3f6fc4" stroke-width="1.600"/><rect x="1020" y="311.5" width="18" height="6" fill="#fff"/><rect x="1022.5" y="312.5" width="13" height="4" rx="2" fill="#3f6fc4"/>
<rect x="400" y="570.300" width="393.500" height="2.200" fill="#5fb3a8"/>
<circle cx="430" cy="621" r="32" fill="#0b9390"/>
<g fill="none" stroke="#d5efe9" stroke-width="1.100"><path d="M408 636 l20 -26 l4 0 l20 26z M414 636 l15 -21 M446 636 l-15 -21 M424 636 v-7 a4 4 0 0 1 8 0 v7 M430 610 v-12"/><path d="M430 598 l6 2 l-6 2.500z" fill="#d5efe9"/></g>
<rect x="397.500" y="588.500" width="65" height="65" fill="none" stroke="#4a80cc" stroke-width="1.200"/>
<rect x="401" y="764.400" width="392" height="2.800" fill="#4fae9f"/>
<text x="401" y="686" font-size="22" font-weight="bold" fill="#0b9390" stroke="#0b9390" stroke-width=".7" textLength="326" lengthAdjust="spacingAndGlyphs">JOURNEY TO BANYAN CLIFFS</text>
<text x="401" y="722" class="mono" font-size="11" font-weight="bold" fill="#0b9390" stroke="#0b9390" stroke-width=".5" textLength="113.500" lengthAdjust="spacingAndGlyphs">DAY ONE, 09:30</text>
<text x="401" y="742.500" class="mono" font-size="10" font-weight="bold" fill="#0b9390" stroke="#0b9390" stroke-width=".5" textLength="214" lengthAdjust="spacingAndGlyphs">LIGHT BREEZE, MORNING MIST</text>
<rect x="401.500" y="670.500" width="392" height="102.500" fill="none" stroke="#4b8ff0" stroke-width="1.300"/>
<rect x="397.5" y="666.5" width="8" height="8" fill="#fff" stroke="#4b8ff0" stroke-width="1.300"/>
<rect x="593.5" y="666.5" width="8" height="8" fill="#fff" stroke="#4b8ff0" stroke-width="1.300"/>
<rect x="789.5" y="666.5" width="8" height="8" fill="#fff" stroke="#4b8ff0" stroke-width="1.300"/>
<rect x="397.5" y="769.0" width="8" height="8" fill="#fff" stroke="#4b8ff0" stroke-width="1.300"/>
<rect x="593.5" y="769.0" width="8" height="8" fill="#fff" stroke="#4b8ff0" stroke-width="1.300"/>
<rect x="789.5" y="769.0" width="8" height="8" fill="#fff" stroke="#4b8ff0" stroke-width="1.300"/>
<rect x="397.5" y="716.0" width="8" height="8" fill="#fff" stroke="#4b8ff0" stroke-width="1.300"/>
<rect x="789.5" y="716.0" width="8" height="8" fill="#fff" stroke="#4b8ff0" stroke-width="1.300"/>
<rect x="395.5" y="688.5" width="12" height="12" fill="#fff" stroke="#4b8ff0" stroke-width="1.300"/>
<rect x="787.5" y="741.5" width="12" height="12" fill="#fff" stroke="#4b8ff0" stroke-width="1.300"/>
<rect x="788.500" y="700.500" width="10" height="10" fill="#f2e20e" stroke="#c9b800" stroke-width="1"/>
<rect x="708" y="662" width="12.500" height="12.500" fill="#4b8ff0"/>
<rect x="400.500" y="809" width="393" height="60" fill="none" stroke="#4a80cc" stroke-width="1.200"/>
<text x="401" y="819" class="serif" font-size="17" font-weight="bold" fill="#111" textLength="357.5" lengthAdjust="spacingAndGlyphs" stroke="#f5efe8" stroke-width=".15">Johanna rolls out of the tent at first light to put the</text>
<text x="401" y="844.5" class="serif" font-size="17" font-weight="bold" fill="#111" textLength="378.5" lengthAdjust="spacingAndGlyphs" stroke="#f5efe8" stroke-width=".15">water on for coffee. She looks not unlike the Michelin</text>
<rect x="815.500" y="575.500" width="394" height="290" fill="none" stroke="#4a80cc" stroke-width="1.200"/>
<text x="816.5" y="588.0" class="serif" font-size="17" font-weight="bold" fill="#111" textLength="375.0" lengthAdjust="spacingAndGlyphs" stroke="#f5efe8" stroke-width=".15">After breakfast, we each lay out what we want to cart</text>
<text x="816.5" y="613.37" class="serif" font-size="17" font-weight="bold" fill="#111" textLength="362.5" lengthAdjust="spacingAndGlyphs" stroke="#f5efe8" stroke-width=".15">along for the day, in addition to food and water. We</text>
<text x="816.5" y="638.74" class="serif" font-size="17" font-weight="bold" fill="#111" textLength="334.0" lengthAdjust="spacingAndGlyphs" stroke="#f5efe8" stroke-width=".15">help one another whittle down our gear to bare</text>
<text x="816.5" y="664.11" class="serif" font-size="17" font-weight="bold" fill="#111" textLength="386.5" lengthAdjust="spacingAndGlyphs" stroke="#f5efe8" stroke-width=".15">essentials—at least one compass, plenty of bug spray—</text>
<text x="816.5" y="689.48" class="serif" font-size="17" font-weight="bold" fill="#111" textLength="330.5" lengthAdjust="spacingAndGlyphs" stroke="#f5efe8" stroke-width=".15">and load everything into our Shifter day packs.</text>
<text x="837.5" y="714.85" class="serif" font-size="17" font-weight="bold" fill="#111" textLength="324.5" lengthAdjust="spacingAndGlyphs" stroke="#f5efe8" stroke-width=".15">We expect to get a little lost in the grasslands.</text>
<text x="816.5" y="740.22" class="serif" font-size="17" font-weight="bold" fill="#111" textLength="371.5" lengthAdjust="spacingAndGlyphs" stroke="#f5efe8" stroke-width=".15">We built in what seemed like plenty of extra time for</text>
<text x="816.5" y="765.59" class="serif" font-size="17" font-weight="bold" fill="#111" textLength="356.0" lengthAdjust="spacingAndGlyphs" stroke="#f5efe8" stroke-width=".15">this leg of the hike, but none of us thought we’d be</text>
<text x="816.5" y="790.96" class="serif" font-size="17" font-weight="bold" fill="#111" textLength="362.0" lengthAdjust="spacingAndGlyphs" stroke="#f5efe8" stroke-width=".15">doing so much backtracking. The grass grows taller</text>
<text x="816.5" y="816.33" class="serif" font-size="17" font-weight="bold" fill="#111" textLength="365.5" lengthAdjust="spacingAndGlyphs" stroke="#f5efe8" stroke-width=".15">than our heads in many places which made sighting</text>
<text x="816.5" y="841.7" class="serif" font-size="17" font-weight="bold" fill="#111" textLength="375.5" lengthAdjust="spacingAndGlyphs" stroke="#f5efe8" stroke-width=".15">landmarks tricky. We use the compasses and are glad</text>
</g>
<rect x="1387" y="153.500" width="351" height="7" fill="#1d1d1d"/>
<rect x="1387" y="160" width="351" height="690" fill="#484848"/>
<rect x="1387" y="160" width="351" height="29" fill="#393939"/><rect x="1387" y="188.500" width="351" height="1.500" fill="#2c2c2c"/>
<rect x="1388" y="160" width="85" height="30" fill="#4a4a4a"/><rect x="1388" y="160" width="85" height="1" fill="#5e5e5e"/><rect x="1473" y="160" width="1.200" height="29" fill="#2a2a2a"/><rect x="1603" y="160" width="1.200" height="29" fill="#2a2a2a"/>
<rect x="1386.500" y="153" width="2" height="697" fill="#262626"/>
<text x="1401" y="181" font-size="17" font-weight="bold" fill="#ececec" textLength="60" lengthAdjust="spacingAndGlyphs">Articles</text>
<text x="1486" y="181" font-size="17" font-weight="bold" fill="#9c9c9c" textLength="106" lengthAdjust="spacingAndGlyphs">Liquid Layout</text>
<path d="M1671 169 v12 l7 -6z M1679.500 169 v12 l7 -6z" fill="#e0e0e0"/><path d="M1697.500 166 v19 M1700.500 166 v19" stroke="#666" stroke-width="1"/>
<path d="M1708 172 h9 l-4.500 5z" fill="#d8d8d8"/><path d="M1719 169.500 h14 M1719 173.500 h14 M1719 177.500 h14 M1719 181.500 h14" stroke="#d8d8d8" stroke-width="1.700"/>
<rect x="1719" y="190" width="19" height="660" fill="#3c3c3c"/><rect x="1718.500" y="190" width="1.500" height="660" fill="#2c2c2c"/><path d="M1722 210 h14 l-7 -9z" fill="#6e6e6e"/>
<rect x="1388" y="224.3" width="330.500" height="2" fill="#2d2d2d"/><rect x="1388" y="226.3" width="330.500" height="1" fill="#525252"/>
<rect x="1388" y="258.1" width="330.500" height="2" fill="#2d2d2d"/><rect x="1388" y="260.1" width="330.500" height="1" fill="#525252"/>
<rect x="1388" y="291.8" width="330.500" height="2" fill="#2d2d2d"/><rect x="1388" y="293.8" width="330.500" height="1" fill="#525252"/>
<rect x="1388" y="325.6" width="330.500" height="2" fill="#2d2d2d"/><rect x="1388" y="327.6" width="330.500" height="1" fill="#525252"/>
<rect x="1388" y="359.4" width="330.500" height="2" fill="#2d2d2d"/><rect x="1388" y="361.4" width="330.500" height="1" fill="#525252"/>
<rect x="1388" y="393.2" width="330.500" height="2" fill="#2d2d2d"/><rect x="1388" y="395.2" width="330.500" height="1" fill="#525252"/>
<rect x="1388" y="427.0" width="330.500" height="2" fill="#2d2d2d"/><rect x="1388" y="429.0" width="330.500" height="1" fill="#525252"/>
<rect x="1388" y="460.7" width="330.500" height="2" fill="#2d2d2d"/><rect x="1388" y="462.7" width="330.500" height="1" fill="#525252"/>
<rect x="1388" y="494.5" width="330.500" height="2" fill="#2d2d2d"/><rect x="1388" y="496.5" width="330.500" height="1" fill="#525252"/>
<rect x="1388" y="528.3" width="330.500" height="2" fill="#2d2d2d"/><rect x="1388" y="530.3" width="330.500" height="1" fill="#525252"/>
<rect x="1388" y="562.1" width="330.500" height="2" fill="#2d2d2d"/><rect x="1388" y="564.1" width="330.500" height="1" fill="#525252"/>
<rect x="1388" y="595.9" width="330.500" height="2" fill="#2d2d2d"/><rect x="1388" y="597.9" width="330.500" height="1" fill="#525252"/>
<rect x="1388" y="629.6" width="330.500" height="2" fill="#2d2d2d"/><rect x="1388" y="631.6" width="330.500" height="1" fill="#525252"/>
<rect x="1388" y="663.4" width="330.500" height="2" fill="#2d2d2d"/><rect x="1388" y="665.4" width="330.500" height="1" fill="#525252"/>
<rect x="1388" y="697.2" width="330.500" height="2" fill="#2d2d2d"/><rect x="1388" y="699.2" width="330.500" height="1" fill="#525252"/>
<rect x="1388" y="731.0" width="330.500" height="2" fill="#2d2d2d"/><rect x="1388" y="733.0" width="330.500" height="1" fill="#525252"/>
<rect x="1388" y="764.8" width="330.500" height="2" fill="#2d2d2d"/><rect x="1388" y="766.8" width="330.500" height="1" fill="#525252"/>
<rect x="1388" y="798.5" width="330.500" height="2" fill="#2d2d2d"/><rect x="1388" y="800.5" width="330.500" height="1" fill="#525252"/>
<rect x="1388" y="832.3" width="330.500" height="2" fill="#2d2d2d"/><rect x="1388" y="834.3" width="330.500" height="1" fill="#525252"/>
<rect x="1395.500" y="200.500" width="20" height="19" fill="#565656" stroke="#2b2b2b" stroke-width="1.500"/><path d="M1399 209 l5.500 7 l10 -17" fill="none" stroke="#f0f0f0" stroke-width="2.300"/>
<path d="M1427 207 h16 l-8 9.500z" fill="#d8d8d8"/>
<text x="1453" y="215" font-size="17" fill="#e2e2e2" textLength="87" lengthAdjust="spacingAndGlyphs">Travel Guide</text>
<rect x="1697.500" y="205.500" width="8" height="8" fill="#3f95ff" stroke="#10203a" stroke-width="1.500"/>
<rect x="1479" y="235.2" width="17.500" height="17.500" fill="#4a4a4a" stroke="#ececec" stroke-width="1.800"/><path d="M1479.500 235.7 l16.500 16.500 M1496 235.7 l-16.500 16.500" stroke="#ececec" stroke-width="1.200"/>
<text x="1509.5" y="249.2" font-size="16.500" fill="#e2e2e2" textLength="161" lengthAdjust="spacingAndGlyphs">&lt;615_Adobe_AI_Map...</text>
<rect x="1479" y="268.9" width="17.500" height="17.500" fill="#4a4a4a" stroke="#ececec" stroke-width="1.800"/><path d="M1479.500 269.4 l16.500 16.500 M1496 269.4 l-16.500 16.500" stroke="#ececec" stroke-width="1.200"/>
<text x="1509.5" y="282.9" font-size="16.500" fill="#e2e2e2" textLength="161" lengthAdjust="spacingAndGlyphs">&lt;Campsite_Shot06_0...</text>
<text x="1471" y="316.7" font-size="16.500" fill="#e2e2e2" textLength="45" lengthAdjust="spacingAndGlyphs">&lt;line&gt;</text>
<text x="1478" y="352.0" class="serif" font-size="21" font-weight="bold" fill="#ececec">T</text>
<text x="1509.5" y="350.5" font-size="16.500" fill="#e2e2e2" textLength="152" lengthAdjust="spacingAndGlyphs">&lt;Table of ContentsJ...</text>
<path d="M1450 369.8 v18 l9.500 -9z" fill="#d0d0d0"/><rect x="1476.500" y="367.3" width="14" height="14" fill="#8a8a8a" stroke="#e0e0e0" stroke-width="1.500"/><rect x="1483.500" y="374.3" width="14" height="14" fill="#777" fill-opacity=".9" stroke="#e0e0e0" stroke-width="1.500"/>
<text x="1509.5" y="384.3" font-size="16.500" fill="#e2e2e2" textLength="60" lengthAdjust="spacingAndGlyphs">&lt;group&gt;</text>
<text x="1478" y="419.6" class="serif" font-size="21" font-weight="bold" fill="#ececec">T</text>
<text x="1509.5" y="418.1" font-size="16.500" fill="#e2e2e2" textLength="166" lengthAdjust="spacingAndGlyphs">&lt;Bushwhacking, rock ...</text>
<text x="1478" y="453.4" class="serif" font-size="21" font-weight="bold" fill="#ececec">T</text>
<text x="1509.5" y="451.9" font-size="16.500" fill="#e2e2e2" textLength="156" lengthAdjust="spacingAndGlyphs">&lt;JONATHAN GOODM...</text>
<rect x="1479" y="471.6" width="17.500" height="17.500" fill="#4a4a4a" stroke="#ececec" stroke-width="1.800"/><path d="M1479.500 472.1 l16.500 16.500 M1496 472.1 l-16.500 16.500" stroke="#ececec" stroke-width="1.200"/>
<text x="1509.5" y="485.6" font-size="16.500" fill="#e2e2e2" textLength="166" lengthAdjust="spacingAndGlyphs">&lt;Hiking_Shot03_0032...</text>
<rect x="1479" y="505.4" width="17.500" height="17.500" fill="#4a4a4a" stroke="#ececec" stroke-width="1.800"/><path d="M1479.500 505.9 l16.500 16.500 M1496 505.9 l-16.500 16.500" stroke="#ececec" stroke-width="1.200"/>
<text x="1509.5" y="519.4" font-size="16.500" fill="#e2e2e2" textLength="166" lengthAdjust="spacingAndGlyphs">&lt;Hiking_Shot01_0236...</text>
<rect x="1479" y="539.2" width="17.500" height="17.500" fill="#4a4a4a" stroke="#ececec" stroke-width="1.800"/><path d="M1479.500 539.7 l16.500 16.500 M1496 539.7 l-16.500 16.500" stroke="#ececec" stroke-width="1.200"/>
<text x="1509.5" y="553.2" font-size="16.500" fill="#e2e2e2" textLength="166" lengthAdjust="spacingAndGlyphs">&lt;Hiking_Shot05_0019...</text>
<rect x="1479" y="573.0" width="17.500" height="17.500" fill="#4a4a4a" stroke="#ececec" stroke-width="1.800"/><path d="M1479.500 573.5 l16.500 16.500 M1496 573.5 l-16.500 16.500" stroke="#ececec" stroke-width="1.200"/>
<text x="1509.5" y="587.0" font-size="16.500" fill="#e2e2e2" textLength="159" lengthAdjust="spacingAndGlyphs">&lt;Waterfall_Shot01_0...</text>
<rect x="1479" y="606.8" width="17.500" height="17.500" fill="#4a4a4a" stroke="#ececec" stroke-width="1.800"/><path d="M1479.500 607.2 l16.500 16.500 M1496 607.2 l-16.500 16.500" stroke="#ececec" stroke-width="1.200"/>
<text x="1509.5" y="620.8" font-size="16.500" fill="#e2e2e2" textLength="166" lengthAdjust="spacingAndGlyphs">&lt;Hiking_Shot02_0001...</text>
<rect x="1479" y="640.5" width="17.500" height="17.500" fill="#4a4a4a" stroke="#ececec" stroke-width="1.800"/><path d="M1479.500 641.0 l16.500 16.500 M1496 641.0 l-16.500 16.500" stroke="#ececec" stroke-width="1.200"/>
<text x="1509.5" y="654.5" font-size="16.500" fill="#e2e2e2" textLength="166" lengthAdjust="spacingAndGlyphs">&lt;Hiking_Shot05_0332...</text>
<rect x="1479" y="674.3" width="17.500" height="17.500" fill="#4a4a4a" stroke="#ececec" stroke-width="1.800"/><path d="M1479.500 674.8 l16.500 16.500 M1496 674.8 l-16.500 16.500" stroke="#ececec" stroke-width="1.200"/>
<text x="1509.5" y="688.3" font-size="16.500" fill="#e2e2e2" textLength="166" lengthAdjust="spacingAndGlyphs">&lt;Hiking_Shot06_0098...</text>
<rect x="1479" y="708.1" width="17.500" height="17.500" fill="#4a4a4a" stroke="#ececec" stroke-width="1.800"/><path d="M1479.500 708.6 l16.500 16.500 M1496 708.6 l-16.500 16.500" stroke="#ececec" stroke-width="1.200"/>
<text x="1509.5" y="722.1" font-size="16.500" fill="#e2e2e2" textLength="166" lengthAdjust="spacingAndGlyphs">&lt;Hiking_Shot01_0237...</text>
<path d="M1450 741.4 v18 l9.500 -9z" fill="#d0d0d0"/><rect x="1476.500" y="738.9" width="14" height="14" fill="#8a8a8a" stroke="#e0e0e0" stroke-width="1.500"/><rect x="1483.500" y="745.9" width="14" height="14" fill="#777" fill-opacity=".9" stroke="#e0e0e0" stroke-width="1.500"/>
<text x="1509.5" y="755.9" font-size="16.500" fill="#e2e2e2" textLength="60" lengthAdjust="spacingAndGlyphs">&lt;group&gt;</text>
<text x="1478" y="791.1" class="serif" font-size="21" font-weight="bold" fill="#ececec">T</text>
<text x="1509.5" y="789.6" font-size="16.500" fill="#e2e2e2" textLength="100" lengthAdjust="spacingAndGlyphs">&lt;Sometimes...</text>
<path d="M1450 808.9 v18 l9.500 -9z" fill="#d0d0d0"/><rect x="1476.500" y="806.4" width="14" height="14" fill="#8a8a8a" stroke="#e0e0e0" stroke-width="1.500"/><rect x="1483.500" y="813.4" width="14" height="14" fill="#777" fill-opacity=".9" stroke="#e0e0e0" stroke-width="1.500"/>
<text x="1509.5" y="823.4" font-size="16.500" fill="#e2e2e2" textLength="60" lengthAdjust="spacingAndGlyphs">&lt;group&gt;</text>
<rect x="1479" y="843.2" width="17.500" height="17.500" fill="#4a4a4a" stroke="#ececec" stroke-width="1.800"/><path d="M1479.500 843.7 l16.500 16.500 M1496 843.7 l-16.500 16.500" stroke="#ececec" stroke-width="1.200"/>
<text x="1509.5" y="857.2" font-size="16.500" fill="#e2e2e2" textLength="80" lengthAdjust="spacingAndGlyphs">&lt;Hiking...</text>
<rect x="1738" y="137" width="3.500" height="713" fill="#232323"/>
<rect x="1741.500" y="139" width="281" height="18.500" fill="#2d2d2d"/><rect x="1741.500" y="157.500" width="281" height="2.500" fill="#222"/>
<rect x="1741.500" y="160" width="281" height="690" fill="#494949"/>
<path d="M2008 143.500 v9 l-5 -4.500z M2014 143.500 v9 l-5 -4.500z" fill="#d0d0d0"/>
<rect x="1863" y="164" width="33" height="7" fill="url(#grip)"/>
<rect x="1749.500" y="178.500" width="261" height="39" rx="4" fill="#2e2e2e" stroke="#3b3b3b"/>
<rect x="1762.500" y="184.500" width="25" height="28" fill="#d8d8d8" stroke="#ececec"/><rect x="1765" y="187" width="20" height="4" fill="#555"/><rect x="1765" y="194" width="8" height="7" fill="#555"/><path d="M1775 195 h10 M1775 199 h10" stroke="#555" stroke-width="1.800"/><rect x="1765" y="204" width="20" height="6" fill="#555"/>
<text x="1805" y="204" font-size="16.500" font-weight="bold" fill="#f0f0f0" textLength="59" lengthAdjust="spacingAndGlyphs">Articles</text>
<rect x="1759.500" y="232.500" width="19" height="19" rx="2" fill="#494949" stroke="#e0e0e0" stroke-width="1.600"/><path d="M1762 237 h14 M1762 241 h6 M1762 245 h6" stroke="#e0e0e0" stroke-width="1.500"/><rect x="1767.500" y="240.500" width="23" height="19" rx="2" fill="#494949" stroke="#e0e0e0" stroke-width="1.800"/><rect x="1771" y="245" width="7" height="6" fill="#e0e0e0"/><path d="M1780 246 h8 M1780 250 h8 M1771 255 h17" stroke="#e0e0e0" stroke-width="1.600"/>
<text x="1805" y="251.500" font-size="16.500" font-weight="bold" fill="#f0f0f0" textLength="106" lengthAdjust="spacingAndGlyphs">Liquid Layout</text>
<rect x="1741.500" y="272.500" width="281" height="2" fill="#2c2c2c"/><rect x="1741.500" y="274.500" width="281" height="1" fill="#5a5a5a"/>
<rect x="1863" y="281.500" width="33" height="7" fill="url(#grip)"/>
<path d="M1762 308 h6 l5 -5 v23 h-11z M1790 308 h-6 l-5 -5 v23 h11z" fill="url(#ggradv)"/><path d="M1776 299 v30" stroke="#e0e0e0" stroke-width="1.600"/>
<text x="1805" y="321" font-size="16.500" font-weight="bold" fill="#f0f0f0" textLength="44" lengthAdjust="spacingAndGlyphs">Pages</text>
<path d="M1761 359 l14.500 -10 l14.500 10 l-14.500 9z" fill="#e6e6e6"/><path d="M1761 367 l4 -2.500 l10.500 7 l10.500 -7 l4 2.500 l-14.500 9z" fill="#c8c8c8"/>
<text x="1805" y="368.500" font-size="16.500" font-weight="bold" fill="#f0f0f0" textLength="48" lengthAdjust="spacingAndGlyphs">Layers</text>
<g fill="none" stroke="#e0e0e0" stroke-width="3"><path d="M1772 402.500 h-3 a6.500 6.500 0 0 0 0 13.500 h3 M1779 402.500 h3 a6.500 6.500 0 0 1 0 13.500 h-3"/><path d="M1769 409.200 h13" stroke-width="3"/></g>
<text x="1805" y="415.500" font-size="16.500" font-weight="bold" fill="#f0f0f0" textLength="40" lengthAdjust="spacingAndGlyphs">Links</text>
<rect x="1741.500" y="436.500" width="281" height="2" fill="#2c2c2c"/><rect x="1741.500" y="438.500" width="281" height="1" fill="#5a5a5a"/>
<rect x="1863" y="444.500" width="33" height="7" fill="url(#grip)"/>
<path d="M1761 468.500 h29" stroke="#e0e0e0" stroke-width="2"/><path d="M1761 476.500 h29" stroke="#e0e0e0" stroke-width="3.500"/><path d="M1761 485.500 h29" stroke="#e0e0e0" stroke-width="5"/>
<text x="1805" y="485" font-size="16.500" font-weight="bold" fill="#f0f0f0" textLength="53" lengthAdjust="spacingAndGlyphs">Stroke</text>
<rect x="1761.500" y="516.500" width="26" height="19" fill="#bbb" stroke="#e0e0e0" stroke-width="1.500"/><rect x="1763" y="518" width="7" height="7" fill="#111"/><rect x="1771.500" y="518" width="7" height="7" fill="#555"/><rect x="1780" y="518" width="7" height="7" fill="#999"/><rect x="1763" y="527" width="7" height="7" fill="#888"/><rect x="1771.500" y="527" width="7" height="7" fill="#aaa"/><rect x="1780" y="527" width="7" height="7" fill="#666"/>
<text x="1805" y="532" font-size="16.500" font-weight="bold" fill="#f0f0f0" textLength="78" lengthAdjust="spacingAndGlyphs">Swatches</text>
<rect x="1761.500" y="563.500" width="27" height="19" fill="url(#ggrad)" stroke="#e0e0e0" stroke-width="1.500"/>
<text x="1805" y="579" font-size="16.500" font-weight="bold" fill="#f0f0f0" textLength="70" lengthAdjust="spacingAndGlyphs">Gradient</text>
<rect x="2023.500" y="58" width="1.200" height="792" fill="#303030"/>
<path d="M2078.9 -21.1 L2070.6 0.3 L2062.2 21.5 L2053.6 42.6 L2044.9 63.5 L2036.0 84.3 L2027.0 105.0 L2017.8 125.5 L2008.5 145.8 L1999.0 166.0 L1989.4 186.0 L1979.5 205.8 L1969.5 225.4 L1959.3 244.9 L1949.0 264.2 L1938.4 283.3 L1927.6 302.2 L1916.7 320.9 L1905.5 339.4 L1894.2 357.7 L1882.6 375.8 L1870.8 393.7 L1858.9 411.4 L1846.6 428.9 L1834.2 446.1 L1821.6 463.1 L1808.7 479.9 L1795.5 496.4 L1782.2 512.7 L1768.6 528.7 L1754.7 544.5 L1740.6 560.1 L1726.2 575.4 L1711.6 590.4 L1696.7 605.2 L1681.6 619.7 L1666.1 633.9 L1650.4 647.9 L1634.5 661.6 L1618.2 675.0 L1601.7 688.1 L1584.8 700.9 L1567.7 713.4 L1550.2 725.7 L1532.5 737.6 L1514.5 749.2 L1496.1 760.5 L1477.4 771.5 L1458.5 782.2 L1439.1 792.5 L1419.5 802.6 L1399.5 812.3 L1379.2 821.6 L1358.6 830.6 L1337.6 839.3 L1316.3 847.6 L1294.6 855.6 L1272.6 863.2 L1250.2 870.5 L1227.4 877.4 L1245.1 895.1 L1267.5 887.9 L1289.7 880.3 L1311.4 872.5 L1332.9 864.2 L1354.0 855.7 L1374.7 846.8 L1395.2 837.6 L1415.3 828.0 L1435.1 818.1 L1454.5 807.9 L1473.7 797.4 L1492.5 786.6 L1511.1 775.5 L1529.3 764.0 L1547.2 752.3 L1564.8 740.3 L1582.2 727.9 L1599.2 715.3 L1616.0 702.4 L1632.4 689.2 L1648.6 675.7 L1664.5 662.0 L1680.2 648.0 L1695.5 633.7 L1710.6 619.1 L1725.5 604.3 L1740.1 589.2 L1754.4 573.9 L1768.5 558.3 L1782.3 542.5 L1795.9 526.4 L1809.2 510.1 L1822.3 493.5 L1835.2 476.7 L1847.8 459.7 L1860.2 442.4 L1872.4 425.0 L1884.4 407.3 L1896.1 389.4 L1907.7 371.2 L1919.0 352.9 L1930.1 334.4 L1941.0 315.6 L1951.8 296.7 L1962.3 277.5 L1972.6 258.2 L1982.8 238.7 L1992.7 219.0 L2002.5 199.1 L2012.1 179.1 L2021.6 158.8 L2030.8 138.4 L2039.9 117.9 L2048.8 97.1 L2057.6 76.3 L2066.2 55.2 L2074.7 34.0 L2083.0 12.7 L2091.2 -8.8Z" fill="#d916b8" fill-opacity=".36"/>
<path d="M2091.2 -8.8 L2083.0 12.7 L2074.7 34.0 L2066.2 55.2 L2057.6 76.3 L2048.8 97.1 L2039.9 117.9 L2030.8 138.4 L2021.6 158.8 L2012.1 179.1 L2002.5 199.1 L1992.7 219.0 L1982.8 238.7 L1972.6 258.2 L1962.3 277.5 L1951.8 296.7 L1941.0 315.6 L1930.1 334.4 L1919.0 352.9 L1907.7 371.2 L1896.1 389.4 L1884.4 407.3 L1872.4 425.0 L1860.2 442.4 L1847.8 459.7 L1835.2 476.7 L1822.3 493.5 L1809.2 510.1 L1795.9 526.4 L1782.3 542.5 L1768.5 558.3 L1754.4 573.9 L1740.1 589.2 L1725.5 604.3 L1710.6 619.1 L1695.5 633.7 L1680.2 648.0 L1664.5 662.0 L1648.6 675.7 L1632.4 689.2 L1616.0 702.4 L1599.2 715.3 L1582.2 727.9 L1564.8 740.3 L1547.2 752.3 L1529.3 764.0 L1511.1 775.5 L1492.5 786.6 L1473.7 797.4 L1454.5 807.9 L1435.1 818.1 L1415.3 828.0 L1395.2 837.6 L1374.7 846.8 L1354.0 855.7 L1332.9 864.2 L1311.4 872.5 L1289.7 880.3 L1267.5 887.9 L1245.1 895.1 L1235.7 885.7 L1260.1 880.5 L1284.2 874.9 L1307.8 868.8 L1331.0 862.4 L1353.8 855.5 L1376.2 848.3 L1398.2 840.6 L1419.9 832.6 L1441.2 824.2 L1462.0 815.4 L1482.6 806.3 L1502.8 796.8 L1522.6 787.0 L1542.1 776.8 L1561.2 766.3 L1580.0 755.4 L1598.5 744.3 L1616.7 732.8 L1634.5 721.0 L1652.1 708.8 L1669.3 696.4 L1686.3 683.7 L1702.9 670.7 L1719.3 657.5 L1735.4 643.9 L1751.3 630.1 L1766.9 616.0 L1782.2 601.7 L1797.3 587.1 L1812.1 572.3 L1826.7 557.2 L1841.1 541.9 L1855.2 526.4 L1869.2 510.7 L1882.9 494.8 L1896.4 478.6 L1909.7 462.3 L1922.9 445.7 L1935.8 429.0 L1948.6 412.1 L1961.2 395.1 L1973.6 377.8 L1985.9 360.5 L1998.0 342.9 L2010.0 325.2 L2021.8 307.4 L2033.5 289.4 L2045.1 271.3 L2056.5 253.1 L2067.8 234.8 L2079.1 216.4 L2090.2 197.8 L2101.2 179.2 L2112.2 160.5 L2123.0 141.7 L2133.8 122.8 L2144.5 103.8 L2155.2 84.8 L2165.8 65.8Z" fill="#9a0a82" fill-opacity=".9"/>
<path d="M2165.8 65.8 L2155.2 84.8 L2144.5 103.8 L2133.8 122.8 L2123.0 141.7 L2112.2 160.5 L2101.2 179.2 L2090.2 197.8 L2079.1 216.4 L2067.8 234.8 L2056.5 253.1 L2045.1 271.3 L2033.5 289.4 L2021.8 307.4 L2010.0 325.2 L1998.0 342.9 L1985.9 360.5 L1973.6 377.8 L1961.2 395.1 L1948.6 412.1 L1935.8 429.0 L1922.9 445.7 L1909.7 462.3 L1896.4 478.6 L1882.9 494.8 L1869.2 510.7 L1855.2 526.4 L1841.1 541.9 L1826.7 557.2 L1812.1 572.3 L1797.3 587.1 L1782.2 601.7 L1766.9 616.0 L1751.3 630.1 L1735.4 643.9 L1719.3 657.5 L1702.9 670.7 L1686.3 683.7 L1669.3 696.4 L1652.1 708.8 L1634.5 721.0 L1616.7 732.8 L1598.5 744.3 L1580.0 755.4 L1561.2 766.3 L1542.1 776.8 L1522.6 787.0 L1502.8 796.8 L1482.6 806.3 L1462.0 815.4 L1441.2 824.2 L1419.9 832.6 L1398.2 840.6 L1376.2 848.3 L1353.8 855.5 L1331.0 862.4 L1307.8 868.8 L1284.2 874.9 L1260.1 880.5 L1235.7 885.7 L1235 900 L2100 900 L2100 60Z" fill="#fff"/>
<text x="1716" y="718.500" font-size="48" fill="#f012be" stroke="#fff" stroke-width="1.700" textLength="158" lengthAdjust="spacingAndGlyphs">Adobe</text>
<text x="1718" y="776" font-size="64" font-weight="bold" fill="#f012be" stroke="#f012be" stroke-width="1.500" textLength="279" lengthAdjust="spacingAndGlyphs">Indesign</text>
<text x="1867.500" y="818" font-size="25" fill="#7c7c7c" stroke="#fff" stroke-width=".7" textLength="131" lengthAdjust="spacingAndGlyphs">Mehregan</text>
</svg></body></html>
